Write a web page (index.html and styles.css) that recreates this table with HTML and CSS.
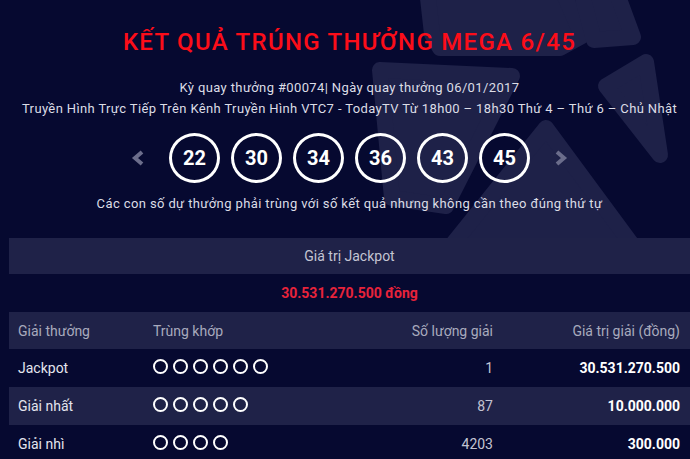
FILE: index.html
```html
<!DOCTYPE html>
<html lang="vi">
<head>
<meta charset="utf-8">
<title>Kết quả Mega 6/45</title>
<link rel="stylesheet" href="styles.css">
</head>
<body>
<div class="page">
  <svg class="bg-logo" width="690" height="240" viewBox="0 0 690 240" aria-hidden="true">
    <g fill="#1e2148" stroke="#1e2148" stroke-width="16" stroke-linejoin="round">
      <path d="M426,-20 L558,-20 L582,36 L560,48 L440,48 L432,34 Z"/>
      <path d="M578,-20 L612,-20 L633,37 L594,40 Z"/>
      <path d="M606,86 L646,62 L660,155 Z"/>
      <path d="M546,128 L636,250 L448,250 Z"/>
      <path d="M380,70 L512,76 L446,206 L392,198 Z"/>
    </g>
  </svg>
  <div class="content">
    <h1 class="title">KẾT QUẢ TRÚNG THƯỞNG MEGA 6/45</h1>
    <p class="meta">Kỳ quay thưởng #00074| Ngày quay thưởng 06/01/2017</p>
    <p class="meta">Truyền Hình Trực Tiếp Trên Kênh Truyền Hình VTC7 - TodayTV Từ 18h00 – 18h30 Thứ 4 – Thứ 6 – Chủ Nhật</p>
    <div class="balls">
      <span class="nav nav-prev"><svg width="14" height="16" viewBox="0 0 14 16"><polyline points="11,2 4,8 11,14" fill="none" stroke="#6b6d8b" stroke-width="4" stroke-linejoin="miter"/></svg></span>
      <span class="ball">22</span>
      <span class="ball">30</span>
      <span class="ball">34</span>
      <span class="ball">36</span>
      <span class="ball">43</span>
      <span class="ball">45</span>
      <span class="nav nav-next"><svg width="14" height="16" viewBox="0 0 14 16"><polyline points="3,2 10,8 3,14" fill="none" stroke="#6b6d8b" stroke-width="4" stroke-linejoin="miter"/></svg></span>
    </div>
    <p class="note">Các con số dự thưởng phải trùng với số kết quả nhưng không cần theo đúng thứ tự</p>

    <div class="results">
      <div class="jp-label">Giá trị Jackpot</div>
      <div class="jp-amount">30.531.270.500 đồng</div>
      <div class="row row-head">
        <div class="c1">Giải thưởng</div>
        <div class="c2">Trùng khớp</div>
        <div class="c3">Số lượng giải</div>
        <div class="c4">Giá trị giải (đồng)</div>
      </div>
      <div class="row">
        <div class="c1">Jackpot</div>
        <div class="c2 dots"><i></i><i></i><i></i><i></i><i></i><i></i></div>
        <div class="c3 num">1</div>
        <div class="c4 val">30.531.270.500</div>
      </div>
      <div class="row row-alt">
        <div class="c1">Giải nhất</div>
        <div class="c2 dots"><i></i><i></i><i></i><i></i><i></i></div>
        <div class="c3 num">87</div>
        <div class="c4 val">10.000.000</div>
      </div>
      <div class="row">
        <div class="c1">Giải nhì</div>
        <div class="c2 dots"><i></i><i></i><i></i><i></i></div>
        <div class="c3 num">4203</div>
        <div class="c4 val">300.000</div>
      </div>
    </div>
  </div>
</div>
</body>
</html>
```

FILE: styles.css
```css
* { box-sizing: border-box; }
html, body { margin: 0; padding: 0; }
body {
  background: #060930;
  font-family: Roboto, "Noto Sans", "Liberation Sans", sans-serif;
  color: #e4e5ee;
  overflow: hidden;
}
.page {
  position: relative;
  width: 690px;
  height: 459px;
  overflow: hidden;
}
.bg-logo {
  position: absolute;
  left: 0;
  top: 0;
  z-index: 0;
}
.content {
  position: relative;
  z-index: 1;
  padding-left: 9px;
  display: flex;
  flex-direction: column;
  align-items: center;
}
.title {
  margin: 28px 0 0;
  font-size: 24px;
  line-height: 28px;
  font-weight: 500;
  letter-spacing: 1.3px;
  color: #fc0d19;
  text-align: center;
  white-space: nowrap;
}
.meta {
  margin: 0;
  font-size: 13px;
  line-height: 21px;
  letter-spacing: 0.37px;
  color: #dcdde6;
  text-align: center;
  white-space: nowrap;
}
.title + .meta { margin-top: 21px; }
.balls {
  margin-top: 14px;
  display: flex;
  align-items: center;
  gap: 11px;
}
.nav {
  display: flex;
  width: 14px;
  height: 16px;
}
.nav-prev { margin-right: 13px; }
.nav-next { margin-left: 13px; }
.ball {
  width: 51px;
  height: 50px;
  border: 3px solid #ffffff;
  border-radius: 50%;
  display: flex;
  align-items: center;
  justify-content: center;
  font-size: 20px;
  font-weight: 700;
  color: #ffffff;
}
.note {
  margin: 10px 0 0;
  font-size: 13px;
  line-height: 21px;
  letter-spacing: 0.39px;
  color: #dcdde6;
  white-space: nowrap;
}
.results {
  margin-top: 24px;
  align-self: stretch;
  font-size: 14px;
}
.jp-label {
  height: 36px;
  background: #1f2248;
  display: flex;
  align-items: center;
  justify-content: center;
  color: #c4c5d3;
}
.jp-amount {
  height: 38px;
  display: flex;
  align-items: center;
  justify-content: center;
  color: #e8233b;
  font-weight: 700;
}
.row {
  display: grid;
  grid-template-columns: 135px 200px 158px 1fr;
  height: 38px;
  align-items: center;
}
.row-head {
  height: 37px;
  background: #1f2248;
  color: #a8aabd;
}
.row-alt { background: #1f2248; }
.c1, .c2, .c3 { padding: 0 9px; }
.c4 { padding: 0 10px 0 9px; text-align: right; }
.c3 { text-align: right; }
.num { color: #c3c4d2; }
.val { font-weight: 700; color: #ffffff; }
.dots {
  display: flex;
  gap: 5px;
  margin-top: -4px;
}
.dots i {
  display: block;
  width: 15px;
  height: 15px;
  border: 2px solid #ffffff;
  border-radius: 50%;
}
```
